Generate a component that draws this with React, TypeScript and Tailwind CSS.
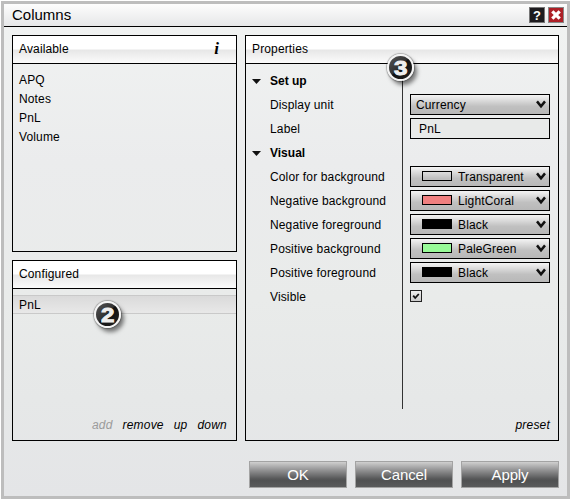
import React, { useState } from 'react';
import { clsx } from 'clsx';

const AVAILABLE = ['APQ', 'Notes', 'PnL', 'Volume'];

const COLORS = [
  { label: 'Color for background', name: 'Transparent', swatch: 'bg-transparent' },
  { label: 'Negative background', name: 'LightCoral', swatch: 'bg-[#f08080]' },
  { label: 'Negative foreground', name: 'Black', swatch: 'bg-black' },
  { label: 'Positive background', name: 'PaleGreen', swatch: 'bg-[#98fb98]' },
  { label: 'Positive foreground', name: 'Black', swatch: 'bg-black' },
];

function PanelHeader({ title, children }: { title: string; children?: React.ReactNode }) {
  return (
    <div className="h-[28px] shrink-0 flex items-center justify-between border-b border-black bg-[linear-gradient(#fff_0,#fff_13px,#e7e7e7_14px,#fbfbfb_100%)] pl-1.5 pr-[17px]">
      <span>{title}</span>
      {children}
    </div>
  );
}

function Select({ value, swatch }: { value: string; swatch?: string }) {
  return (
    <button className="mt-px w-[140px] h-[21px] flex items-center border border-black bg-[linear-gradient(#f4f4f4,#c0c0c0_60%,#b8b8b8)] pl-[5px] pr-[3px]">
      {swatch && <span className={clsx('w-[30px] h-[10px] ml-1.5 mr-1.5 mb-px border border-black', swatch)} />}
      <span className="pt-px leading-5">{value}</span>
      <svg className="ml-auto" width="10" height="9" viewBox="0 0 10 9">
        <path d="M1 1.4 L5 6.3 L9 1.4" fill="none" stroke="#111" strokeWidth="2.5" />
      </svg>
    </button>
  );
}

function Row({ label, children }: { label: string; children: React.ReactNode }) {
  return (
    <div className="h-6 flex items-start">
      <span className="w-[140px] leading-[25px]">{label}</span>
      {children}
    </div>
  );
}

function Section({ title }: { title: string }) {
  return (
    <div className="h-6 flex items-center -ml-[18px] font-bold tracking-[0px]">
      <svg className="mr-[9px]" width="9" height="5" viewBox="0 0 9 5">
        <path d="M0 0h9L4.5 5z" fill="#111" />
      </svg>
      <span className="leading-[23px]">{title}</span>
    </div>
  );
}

// Numbered callout
function Marker({ n, className }: { n: number; className: string }) {
  return (
    <div
      className={clsx(
        'absolute size-[27px] rounded-full border-2 border-[#f4f4f4] flex items-center justify-center bg-[linear-gradient(135deg,#555_0%,#333_45%,#111_50%,#222_100%)] text-[#eee] text-[21px] leading-none font-bold shadow-[3px_4px_4px_rgba(0,0,0,0.5),0_0_1px_1px_rgba(0,0,0,0.25)]',
        className
      )}
    >
      <span className="scale-x-115 [-webkit-text-stroke:1px_#eee]">{n}</span>
    </div>
  );
}

export default function App() {
  const [visible, setVisible] = useState(true);

  return (
    <main className="w-[571px] h-[500px] bg-white p-px font-['Liberation_Sans',Arial,sans-serif] text-[12px] leading-[19px] tracking-[0.14px] text-black">
      <div className="relative w-[569px] h-[498px] flex flex-col border-3 border-[#bdbdbd] bg-[linear-gradient(#f1f3f2_0%,#ebeced_32%,#e9ebea_60%,#e6e8e8_80%,#e4e5e7_100%)]">
        {/* Title bar */}
        <header className="h-[23px] shrink-0 flex items-center border-b border-black bg-[linear-gradient(#fdfdfd,#e6e7e8)] pl-2 pr-[3px]">
          <h1 className="text-[15px] tracking-normal leading-[22px]">Columns</h1>
          <div className="ml-auto flex gap-[3px]">
            <button className="size-4 flex items-center justify-center border border-[#777] bg-[#1d1b1e] text-white text-[13px] leading-none font-bold tracking-normal">
              ?
            </button>
            <button className="size-4 flex items-center justify-center border border-[#888] bg-[#ad2027]">
              <svg width="10" height="10" viewBox="0 0 10 10">
                <path d="M1.3 1.3l7.4 7.4M8.7 1.3l-7.4 7.4" stroke="#fff" strokeWidth="3.2" />
              </svg>
            </button>
          </div>
        </header>

        <div className="mt-2 h-[406px] flex gap-2 pl-2">
          <div className="w-[225px] flex flex-col gap-2">
            <section className="h-[217px] border border-black">
              <PanelHeader title="Available">
                <span className="mb-0.5 font-['Liberation_Serif',serif] italic font-bold text-[17px] leading-none">i</span>
              </PanelHeader>
              <ul className="pt-[7px] pl-1.5">
                {AVAILABLE.map((item) => (
                  <li key={item}>{item}</li>
                ))}
              </ul>
            </section>

            <section className="h-[181px] flex flex-col border border-black">
              <PanelHeader title="Configured" />
              <div className="mt-1.5 h-[19px] leading-[18px] border-y border-[#c9c9c9] bg-[linear-gradient(#dadada,#e8e8e8)] pl-1.5">
                PnL
              </div>
              <div className="mt-auto mb-[5px] flex justify-end gap-[10px] pr-[9px] italic tracking-[0.2px]">
                <button className="text-[#9b9b9b]">add</button>
                <button>remove</button>
                <button>up</button>
                <button>down</button>
              </div>
            </section>
          </div>

          <section className="w-[314px] flex flex-col border border-black">
            <PanelHeader title="Properties" />
            <div className="flex-1 flex flex-col bg-[linear-gradient(#333,#333)] bg-[length:1px_345px] bg-[position:156px_0] bg-no-repeat pt-[5px] pl-[24px]">
              <Section title="Set up" />
              <Row label="Display unit">
                <Select value="Currency" />
              </Row>
              <Row label="Label">
                <div className="mt-px w-[140px] h-[21px] leading-[21px] border border-black bg-[#e8eae9] pl-2">PnL</div>
              </Row>
              <Section title="Visual" />
              {COLORS.map((c) => (
                <Row key={c.label} label={c.label}>
                  <Select value={c.name} swatch={c.swatch} />
                </Row>
              ))}
              <Row label="Visible">
                <button
                  onClick={() => setVisible(!visible)}
                  className="mt-[5px] size-3 flex items-center justify-center border border-[#222] bg-[linear-gradient(#eee,#ccc)]"
                >
                  {visible && (
                    <svg width="8" height="8" viewBox="0 0 8 8">
                      <path d="M1.2 3.6L3.2 6L6.8 2" fill="none" stroke="#111" strokeWidth="1.8" />
                    </svg>
                  )}
                </button>
              </Row>
              <button className="mt-auto mb-[5px] mr-2 self-end italic tracking-[0.2px]">preset</button>
            </div>
          </section>
        </div>

        {/* Dialog actions */}
        <footer className="mt-5 flex justify-end gap-2 pr-2 text-white text-[15px] tracking-[-0.1px]">
          {['OK', 'Cancel', 'Apply'].map((action) => (
            <button
              key={action}
              className="w-[98px] h-[27px] border border-[#a3a3a3] bg-[linear-gradient(#cfcfcf_0%,#8e8e8f_35%,#555657_68%,#505152_75%,#595a5b_100%)] leading-[25px]"
            >
              {action}
            </button>
          ))}
        </footer>

        <Marker n={3} className="left-[383px] top-[50px]" />
        <Marker n={2} className="left-[90px] top-[297px]" />
      </div>
    </main>
  );
}
